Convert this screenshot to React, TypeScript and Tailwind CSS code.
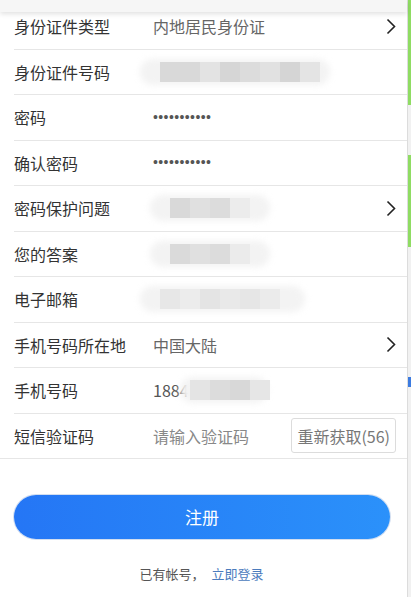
import type { ReactNode } from 'react'

const font = { fontFamily: '"Noto Sans CJK SC", "Noto Sans", sans-serif' }

function Chevron() {
  return (
    <svg width="10" height="17" viewBox="0 0 10 17" className="ml-auto mr-[11px]">
      <path d="M1.5 1.5 L8.5 8.5 L1.5 15.5" fill="none" stroke="#222" strokeWidth="1.6" />
    </svg>
  )
}

// pixelated blur blocks hiding personal data
function Blur({ blocks, w, inset = 20 }: { blocks: string[]; w: number; inset?: number }) {
  return (
    <div className="relative flex items-center h-[30px]" style={{ width: w }}>
      <div className="absolute inset-y-[2px] left-0 right-0 rounded-full bg-[#f3f3f3] blur-[3px]" />
      <div className="relative flex h-[20px]" style={{ marginLeft: inset }}>
        {blocks.map((c, i) => (
          <div key={i} className="w-[20px] h-[20px]" style={{ background: c }} />
        ))}
      </div>
    </div>
  )
}

function Dots() {
  return (
    <span className="text-[14px] text-[#555] tracking-[0.4px]" style={{ fontFamily: '"Liberation Sans", sans-serif' }}>
      •••••••••••
    </span>
  )
}

function Row({ label, children, arrow, last }: { label: string; children?: ReactNode; arrow?: boolean; last?: boolean }) {
  return (
    <div className={`flex items-center h-[45.5px] border-b border-[#e6e6e6] ${last ? 'pl-[14px]' : 'ml-[14px]'}`}>
      <div className="w-[139px] shrink-0 text-[16px] text-[#333]">{label}</div>
      <div className="flex-1 flex items-center text-[16px] text-[#666]">
        {children}
        {arrow && <Chevron />}
      </div>
    </div>
  )
}

export default function App() {
  return (
    <div className="flex w-[411px] h-[597px] bg-white overflow-hidden" style={font}>
      <div className="relative flex-1 flex flex-col">
        <div className="absolute top-0 left-0 right-0 h-[12px] bg-[#f6f6f6] shadow-[0_2px_5px_rgba(0,0,0,0.12)] z-10" />
        <div className="mt-[4px] flex flex-col">
          <Row label="身份证件类型" arrow>内地居民身份证</Row>
          <Row label="身份证件号码">
            <div className="-ml-[13px]">
              <Blur w={190} blocks={['#d9d9d9', '#d9d9d9', '#e3e3e3', '#d6d6d6', '#dcdcdc', '#e1e1e1', '#d5d5d5', '#e4e4e4']} />
            </div>
          </Row>
          <Row label="密码"><Dots /></Row>
          <Row label="确认密码"><Dots /></Row>
          <Row label="密码保护问题" arrow>
            <div className="-ml-[3px]">
              <Blur w={120} blocks={['#d9d9d9', '#e0e0e0', '#dcdcdc', '#ececec']} />
            </div>
          </Row>
          <Row label="您的答案">
            <div className="-ml-[3px]">
              <Blur w={120} blocks={['#dadada', '#e0e0e0', '#dcdcdc', '#ebebeb']} />
            </div>
          </Row>
          <Row label="电子邮箱">
            <div className="-ml-[13px]">
              <Blur w={165} blocks={['#e7e7e7', '#ececec', '#e4e4e4', '#e9e9e9', '#e6e6e6', '#ebebeb']} />
            </div>
          </Row>
          <Row label="手机号码所在地" arrow>中国大陆</Row>
          <Row label="手机号码">
            <span className="text-[#555]">1884</span>
            <div className="-ml-[9px]">
              <Blur w={88} inset={10} blocks={['#e4e4e4', '#dcdcdc', '#d8d8d8', '#e6e6e6']} />
            </div>
          </Row>
          <Row label="短信验证码" last>
            <span className="text-[#888]">请输入验证码</span>
            <div className="ml-auto mr-[11px] h-[35px] px-[5px] flex items-center border border-[#dcdcdc] rounded-[3px] text-[16px] text-[#777]">
              重新获取(56)
            </div>
          </Row>
        </div>
        <div className="mt-[36px] mx-[14px] mr-[17px] h-[44px] rounded-full bg-gradient-to-r from-[#2576f5] to-[#2b91fa] flex items-center justify-center text-white text-[17px] shadow-[0_0_0_1px_rgba(180,200,230,0.6)]">
          注册
        </div>
        <div className="mt-[25px] flex justify-center text-[13px] text-[#555] pr-[4px]">
          <span>已有帐号，</span>
          <span className="ml-[7px] text-[#4b7bbd]">立即登录</span>
        </div>
      </div>
      <div className="w-[4px] flex flex-col border-l border-[#dcdcdc] bg-[#f1f1f1]">
        <div className="h-[105px] bg-[#8fdc63]" />
        <div className="h-[50px]" />
        <div className="h-[92px] bg-[#8fdc63]" />
        <div className="h-[130px]" />
        <div className="h-[10px] bg-[#3c7be0]" />
      </div>
    </div>
  )
}
